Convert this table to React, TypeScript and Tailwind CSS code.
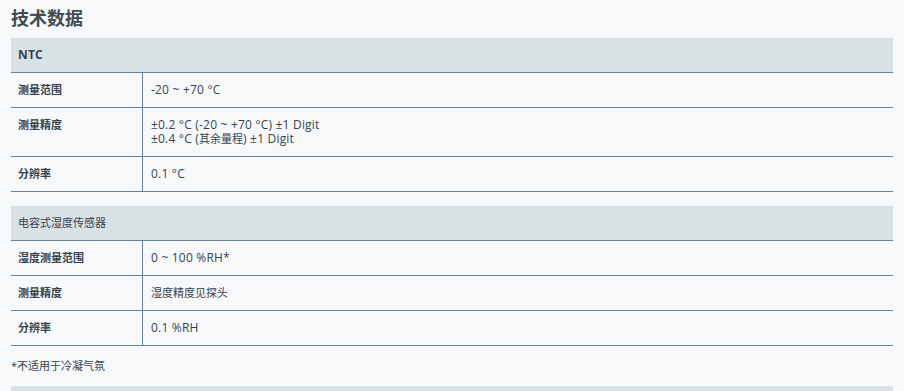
import React from 'react';

type Row = { label: string; value: string[] };

const sections: { title: string; bold: boolean; rows: Row[] }[] = [
  {
    title: 'NTC',
    bold: true,
    rows: [
      { label: '测量范围', value: ['-20 ~ +70 °C'] },
      { label: '测量精度', value: ['±0.2 °C (-20 ~ +70 °C) ±1 Digit', '±0.4 °C (其余量程) ±1 Digit'] },
      { label: '分辨率', value: ['0.1 °C'] },
    ],
  },
  {
    title: '电容式湿度传感器',
    bold: false,
    rows: [
      { label: '湿度测量范围', value: ['0 ~ 100 %RH*'] },
      { label: '测量精度', value: ['湿度精度见探头'] },
      { label: '分辨率', value: ['0.1 %RH'] },
    ],
  },
];

const font = { fontFamily: '"Open Sans", "Noto Sans CJK SC", sans-serif' };

// latin runs sit a touch larger than the CJK ones in the original
const Mixed = ({ text }: { text: string }) => (
  <>
    {text.split(/([\u4e00-\u9fff]+)/).map((part, i) =>
      /[\u4e00-\u9fff]/.test(part) ? (
        <span key={i}>{part}</span>
      ) : (
        <span key={i} className="inline-block whitespace-pre text-[12px] leading-[14px] tracking-[0.2px]">
          {part}
        </span>
      )
    )}
  </>
);

const Section = ({ title, bold, rows }: { title: string; bold: boolean; rows: Row[] }) => (
  <div>
    <div
      className={`bg-[#d8e1e4] border-b border-[#5f8798] px-[7px] py-[10px] leading-[14px] ${bold ? 'font-bold' : ''}`}
    >
      <Mixed text={title} />
    </div>
    {rows.map((r) => (
      <div key={r.label + r.value[0]} className="flex border-b border-[#5f8798]">
        <div className="w-[132px] shrink-0 border-r border-[#5f8798] px-[7px] py-[10px] leading-[14px] font-bold">
          {r.label}
        </div>
        <div className="flex-1 px-[8px] py-[10px] leading-[14px]">
          {r.value.map((v) => (
            <div key={v} className="h-[14px] whitespace-nowrap">
              <Mixed text={v} />
            </div>
          ))}
        </div>
      </div>
    ))}
  </div>
);

export default function App() {
  return (
    <div className="min-h-[391px] bg-[#f6f8fa] pl-[11px] pr-[11px] text-[11px] text-[#38444e]" style={font}>
      <h1 className="h-[38px] pt-[1px] text-[18px] leading-[34px] font-bold text-[#444c52]">技术数据</h1>
      <Section {...sections[0]} />
      <div className="h-[14px]" />
      <Section {...sections[1]} />
      <div className="h-[40px] flex items-center">*不适用于冷凝气氛</div>
      <div className="h-[10px] bg-[#d8e1e4]" />
    </div>
  );
}
